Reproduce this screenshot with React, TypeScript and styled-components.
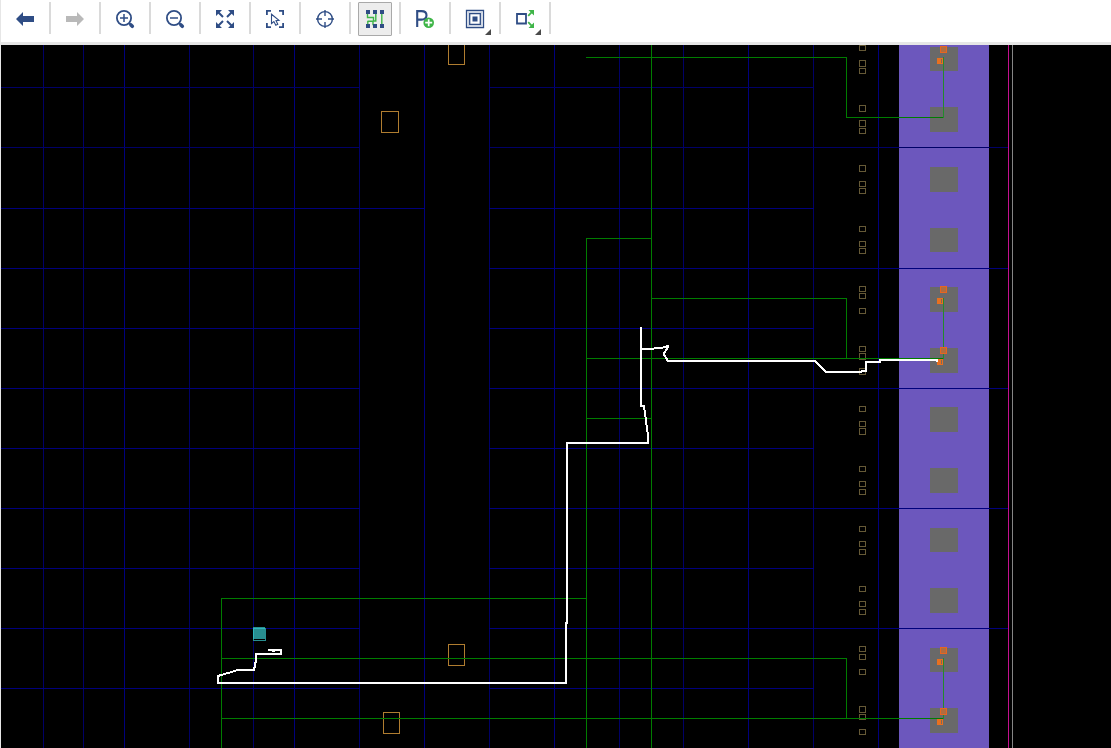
import React from 'react';
import styled, { createGlobalStyle } from 'styled-components';

const GlobalStyle = createGlobalStyle`
  body { margin: 0; background: #000; font-family: "Open Sans", sans-serif; overflow: hidden; }
  *, *::before, *::after { box-sizing: border-box; }
`;

const Window = styled.div`
  width: 1111px;
  height: 748px;
  display: flex;
  flex-direction: column;
  border-left: 1px solid #e6e6e6;
  background: #000;
  overflow: hidden;
`;

const Toolbar = styled.header`
  height: 45px;
  flex: none;
  display: flex;
  align-items: flex-start;
  background: #fff;
  border-bottom: 3px solid #e6e6e6;
`;

const Slot = styled.div`
  width: 50px;
  height: 34px;
  flex: none;
  display: flex;
  justify-content: center;
  padding-top: 2px;
  border-right: 2px solid #dadada;
  border-image: linear-gradient(transparent 3px, #dadada 3px) 1;
`;

const ToolButton = styled.button<{ $active?: boolean }>`
  width: 34px;
  height: 34px;
  flex: none;
  padding: 0;
  display: grid;
  place-items: center;
  position: relative;
  border: 1px solid ${(p) => (p.$active ? '#a9a9a9' : 'transparent')};
  border-radius: 1px;
  background: ${(p) => (p.$active ? '#ededed' : 'transparent')};
`;

const Glyph = styled.svg`
  width: 20px;
  height: 20px;
  display: block;
  overflow: visible;
`;

const MenuCorner = styled.span`
  position: absolute;
  right: 0;
  bottom: 0;
  width: 6px;
  height: 6px;
  background: #4a4a4a;
  clip-path: polygon(100% 0, 100% 100%, 0 100%);
`;

const Viewport = styled.main`
  flex: 1;
  min-height: 0;
  display: flex;
`;

const Layout = styled.svg`
  width: 1110px;
  height: 703px;
  display: block;
  flex: none;
`;

const NAVY = '#2f4d85';
const GREEN = '#3fb548';

const tools: { name: string; active?: boolean; menu?: boolean; icon: React.ReactNode }[] = [
  { name: 'Back', icon: <path d="M1 10l7-7v4h11v6H8v4z" fill={NAVY} /> },
  { name: 'Forward', icon: <path d="M19 10l-7-7v4H1v6h11v4z" fill="#b9b9b9" /> },
  {
    name: 'Zoom in',
    icon: (
      <g fill="none" stroke={NAVY}>
        <circle cx="9" cy="9" r="7.1" strokeWidth="1.8" />
        <path d="M5 9h8M9 5v8" strokeWidth="1.5" />
        <path d="M14.2 14.2l1.5 1.5" strokeWidth="2" />
        <path d="M16 16l1.3 1.3" strokeWidth="3.6" strokeLinecap="round" />
      </g>
    ),
  },
  {
    name: 'Zoom out',
    icon: (
      <g fill="none" stroke={NAVY}>
        <circle cx="9" cy="9" r="7.1" strokeWidth="1.8" />
        <path d="M5 9h8" strokeWidth="1.5" />
        <path d="M14.2 14.2l1.5 1.5" strokeWidth="2" />
        <path d="M16 16l1.3 1.3" strokeWidth="3.6" strokeLinecap="round" />
      </g>
    ),
  },
  {
    name: 'Zoom fit',
    icon: (
      <g fill={NAVY} stroke={NAVY}>
        <path d="M1 1h6L1 7zM19 1h-6l6 6zM1 19h6l-6-6zM19 19h-6l6-6z" stroke="none" />
        <path d="M3 3l5 5M17 3l-5 5M3 17l5-5M17 17l-5-5" strokeWidth="2" />
      </g>
    ),
  },
  {
    name: 'Zoom to selection',
    icon: (
      <g fill="none" stroke={NAVY}>
        <path d="M1.9 6V1.9H6M14 1.9h4.1V6M18.1 14v4.1H14M6 18.1H1.9V14" strokeWidth="1.8" />
        <path d="M6.5 5.2v9.3l2.4-2 1.9 3.7 2-1-1.8-3.5 3-.4z" strokeWidth="1.1" />
      </g>
    ),
  },
  {
    name: 'Auto fit',
    icon: (
      <g fill="none" stroke={NAVY}>
        <circle cx="10" cy="10" r="7.4" strokeWidth="1.4" />
        <path d="M10 1v6M10 13v6M1 10h6M13 10h6" strokeWidth="1.4" />
      </g>
    ),
  },
  {
    name: 'Routing resources',
    active: true,
    icon: (
      <g>
        <path
          d="M2.5 4v4.5h6v3.5h3M10.8 4v8.5M2.5 12.2h5.5v4M2.8 12v4M16.8 4v12"
          fill="none"
          stroke={GREEN}
          strokeWidth="1.4"
        />
        <path d="M1 1h4v4H1zM8 1h4v4H8zM15 1h4v4h-4zM1 15h4v4H1zM8 15h4v4H8zM15 15h4v4h-4z" fill={NAVY} />
      </g>
    ),
  },
  {
    name: 'Draw Pblock',
    icon: (
      <g>
        <path d="M2.2 18V2.1h4.2c3.8 0 5.1 1.5 5.1 4.1s-1.6 4.4-5.3 4.4h-4" fill="none" stroke={NAVY} strokeWidth="2.1" />
        <circle cx="13.7" cy="13.7" r="5.3" fill={GREEN} />
        <path d="M10.2 13.7h7M13.7 10.2v7" stroke="#fff" strokeWidth="1.7" />
      </g>
    ),
  },
  {
    name: 'Cell drag mode',
    menu: true,
    icon: (
      <g fill="none" stroke={NAVY}>
        <path d="M1.5 1.5h17v17h-17z" fill="#fff" strokeWidth="1.3" />
        <path d="M3.2 3.2h13.6v13.6H3.2z" stroke="#cdd5e3" strokeWidth="1.5" />
        <path d="M4.7 4.7h10.6v10.6H4.7z" fill="#fff" strokeWidth="1.3" />
        <path d="M7.5 7.5h5v5h-5z" fill={NAVY} stroke="none" />
      </g>
    ),
  },
  {
    name: 'Show connectivity',
    menu: true,
    icon: (
      <g fill="none">
        <path d="M2 5h9v9.5H2z" stroke={NAVY} strokeWidth="1.8" />
        <path d="M13.2 6.8l3.6-3.6M13.2 13.2l3.6 3.6" stroke={GREEN} strokeWidth="1.8" />
        <path d="M13.5 1H19v5.5zM13.5 19H19v-5.5z" fill={GREEN} />
      </g>
    ),
  },
];

const DIM = '#000067';
const BLUE = '#00007c';

const columns: [number, string][] = [
  [43, DIM], [83, DIM], [124, BLUE], [189, DIM], [253, DIM], [294, BLUE], [359, DIM], [424, BLUE],
  [489, DIM], [554, BLUE], [619, DIM], [683, DIM], [748, BLUE], [813, DIM], [878, BLUE],
];

const rows = [87, 147, 208, 268, 328, 388, 448, 508, 568, 628, 688];
const wideRows = [147, 268, 388, 508, 628];

const pads: [number, number][] = [
  [47, 24], [107, 25], [167, 25], [228, 24], [287, 25], [348, 25],
  [407, 25], [468, 25], [528, 24], [588, 25], [648, 24], [708, 25],
];

const pins: [number, number][] = [
  [45, 6], [60, 7], [68, 6], [105, 7], [120, 7], [128, 6], [165, 7], [181, 6], [188, 6],
  [226, 6], [241, 6], [248, 6], [286, 6], [293, 6], [308, 6], [346, 6], [353, 7], [368, 7],
  [406, 6], [421, 6], [428, 7], [466, 6], [481, 6], [489, 6], [526, 6], [541, 6], [549, 6],
  [586, 6], [601, 6], [609, 6], [646, 6], [654, 6], [669, 6], [706, 7], [714, 6], [729, 6],
];

const placed: [number, number][] = [[46, 58], [286, 298], [347, 359], [647, 659], [708, 719]];

const cells: [number, number, number][] = [[448, 43, 17], [381, 111, 18], [448, 644, 17], [383, 712, 17]];

const regionNets =
  'M586 57.5H847M846.5 57V118M846 117.5H943' +
  'M651.5 45V748M586.5 238V748M586 238.5H652M651 298.5H847M846.5 298V359M586 358.5H943M586 418.5H652' +
  'M221 598.5H587M221.5 598V748M221 658.5H847M846.5 658V719M221 718.5H943';

const padNets = 'M943.5 57V118M943.5 298V359M943.5 658V719';

const routes =
  'M641 327V406H644L648 436V443H567V623H566V683H218V676L238 670H254L256 660V654H281V650H268' +
  'M641 349H649L668 347L663.5 354L668 361H815L826 372H861L862 371H866V362H880V360H937V362';

function Device() {
  return (
    <Layout viewBox="1 45 1110 703" shapeRendering="crispEdges" fill="none">
      <rect x="899" y="45" width="90" height="703" fill="#6c57bd" />
      {pads.map(([y, h]) => (
        <rect key={y} x="930" y={y} width="28" height={h} fill="#696969" />
      ))}
      {columns.map(([x, c]) => (
        <rect key={x} x={x} y="45" width="1" height="703" fill={c} />
      ))}
      {rows.map((y) => {
        const c = y === 87 || y === 147 ? DIM : BLUE;
        return (
          <g key={y} fill={c}>
            <rect x="1" y={y} width={y === 208 ? 424 : 359} height="1" />
            <rect x="489" y={y} width={wideRows.includes(y) ? 519 : 325} height="1" />
          </g>
        );
      })}
      {pins.map(([y, h]) => (
        <rect key={y} x="859.5" y={y + 0.5} width="6" height={h - 1} stroke="#655936" />
      ))}
      {cells.map(([x, y, w]) => (
        <rect key={`${x}-${y}`} x={x + 0.5} y={y + 0.5} width={w - 1} height="21" stroke="#b07d30" />
      ))}
      <path d={regionNets} stroke="#007c00" />
      <path d={padNets} stroke="#238b2b" />
      {placed.map(([top, low]) => (
        <g key={top}>
          <rect x="940.5" y={top + 0.5} width="6" height="6" fill="#b06c40" stroke="#e8651f" />
          <rect x="937" y={low} width="6" height="6" fill="#e8701f" />
          <rect x="941" y={low + 1} width="1" height="4" fill="#7d6858" />
        </g>
      ))}
      <rect x="253" y="627" width="12" height="12" fill="#288e90" />
      <path d="M253 628.5H266M253.5 628V639" stroke="#30b5bc" />
      <path d="M265.5 628V641M253 640.5H266M253.5 639V641" stroke="#288e90" />
      <path d={routes} stroke="#fff" strokeWidth="2" />
      <path d="M666 345h3v2h-3zM272 651h3v1h-3z" fill="#fff" />
      <rect x="1008" y="45" width="1" height="703" fill="#c5108f" />
      <rect x="1012" y="45" width="1" height="703" fill="#858585" />
    </Layout>
  );
}

export default function App() {
  return (
    <>
      <GlobalStyle />
      <Window>
        <Toolbar>
          {tools.map((t) => (
            <Slot key={t.name}>
              <ToolButton $active={t.active} aria-label={t.name}>
                <Glyph viewBox="0 0 20 20">{t.icon}</Glyph>
                {t.menu && <MenuCorner />}
              </ToolButton>
            </Slot>
          ))}
        </Toolbar>
        <Viewport>
          <Device />
        </Viewport>
      </Window>
    </>
  );
}
